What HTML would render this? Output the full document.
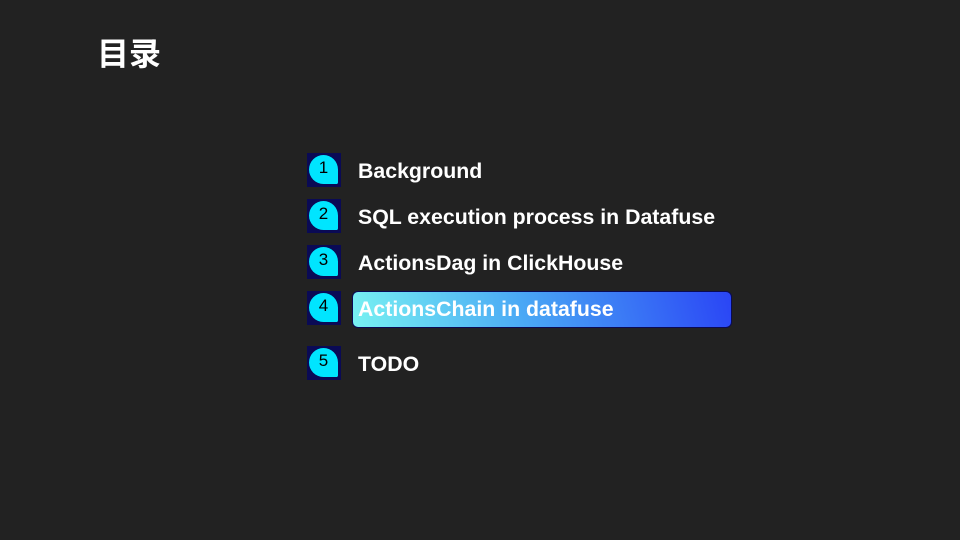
<!DOCTYPE html>
<html><head><style>
body{margin:0;width:960px;height:540px;background:#222;overflow:hidden;position:relative;font-family:"Liberation Sans","Noto Sans CJK SC",sans-serif;}
h1{position:absolute;left:97px;top:29px;margin:0;color:#fff;font-size:32px;font-weight:bold;}
.ic{position:absolute;left:307px;width:34px;height:34px;background:#0a0a55;}
.ic div{position:absolute;left:2px;top:2px;width:29px;height:29px;background:#00e5ff;border-radius:15px 15px 2px 15px;font-size:17px;color:#000;text-align:center;line-height:26px;}
.t{position:absolute;left:358px;color:#fff;font-size:21.3px;font-weight:bold;}
.bar{position:absolute;left:352px;top:291px;width:378px;height:35px;border:1.5px solid #0a0a55;border-radius:6px;background:linear-gradient(75deg,#78f2f2 0%,#4aa8f5 45%,#2a45f5 100%);}
</style></head><body>
<h1>目录</h1>
<div class="ic" style="top:153px"><div>1</div></div>
<div class="ic" style="top:199px"><div>2</div></div>
<div class="ic" style="top:245px"><div>3</div></div>
<div class="ic" style="top:291px"><div>4</div></div>
<div class="ic" style="top:346px"><div>5</div></div>
<div class="bar"></div>
<div class="t" style="top:159px">Background</div>
<div class="t" style="top:205px">SQL execution process in Datafuse</div>
<div class="t" style="top:251px">ActionsDag in ClickHouse</div>
<div class="t" style="top:297px">ActionsChain in datafuse</div>
<div class="t" style="top:352px">TODO</div>
</body></html>
